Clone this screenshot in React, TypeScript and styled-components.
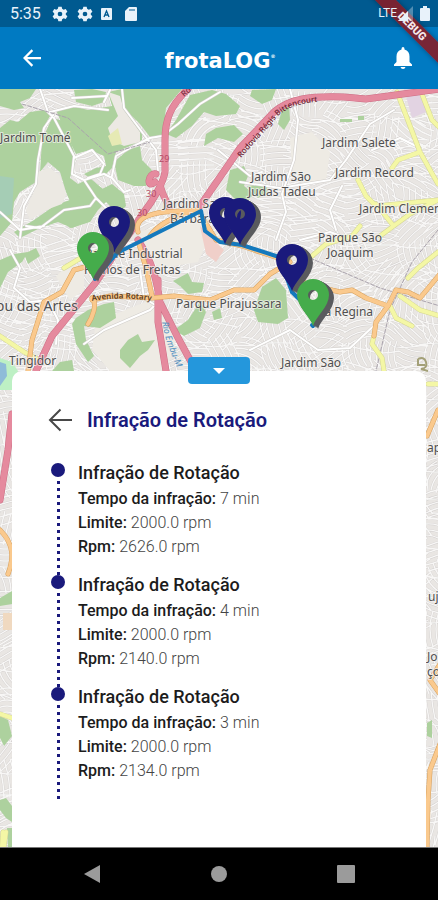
import React from "react";
import styled, { createGlobalStyle } from "styled-components";

const GlobalStyle = createGlobalStyle`
  *, *::before, *::after { box-sizing: border-box; }
  body { margin: 0; background: #000; font-family: Roboto, "Liberation Sans", sans-serif; }
  button { font: inherit; }
`;

const NAVY = "#1a1a7c";
const GREEN = "#45ac4b";

const Screen = styled.div`
  position: relative;
  display: flex;
  flex-direction: column;
  min-height: 100vh;
  overflow: hidden;
  background: #eeebe8;
`;

const StatusBar = styled.div`
  display: flex;
  align-items: center;
  justify-content: space-between;
  height: 27px;
  padding: 0 8px 0 10px;
  background: #005a90;
  color: #e8f2fa;
`;

const StatusGroup = styled.div<{ $gap: number }>`
  position: relative;
  z-index: 1;
  display: flex;
  align-items: center;
  gap: ${(p) => p.$gap}px;
`;

const Clock = styled.time`
  width: 34px;
  font-size: 16px;
  line-height: 27px;
`;

const Network = styled.span`
  font-size: 12px;
  line-height: 27px;
`;

const AppBar = styled.header`
  display: grid;
  grid-template-columns: 64px 1fr 70px;
  align-items: center;
  height: 62px;
  background: #007ac2;
  color: #fff;
`;

const IconButton = styled.button`
  display: flex;
  align-items: center;
  justify-content: center;
  padding: 0;
  border: 0;
  background: none;
  color: inherit;
  cursor: pointer;
`;

const Brand = styled.h1`
  margin: 0;
  padding-left: 8px;
  text-align: center;
  font: 700 21px/28px "DejaVu Sans", sans-serif;

  small { font-size: 5px; vertical-align: 10px; }
`;

const DebugBanner = styled.div`
  position: absolute;
  top: 19px;
  right: -29px;
  width: 110px;
  transform: rotate(45deg);
  background: rgba(130, 30, 42, 0.92);
  box-shadow: 0 0 5px rgba(0, 0, 0, 0.35);
  color: #f5e8ea;
  text-align: center;
  font-size: 11px;
  font-weight: 900;
  line-height: 15px;
`;

const Stage = styled.main`
  position: relative;
  display: flex;
  flex: 1;
  flex-direction: column;
  border-bottom: 1px solid #777;
`;

const MapCanvas = styled.svg`
  position: absolute;
  inset: 0;
  width: 100%;
  height: 100%;
`;

const Sheet = styled.section`
  position: relative;
  flex: 1;
  margin: 282px 12px 0;
  padding: 36px 36px 40px;
  border-radius: 10px 10px 0 0;
  background: #fff;
`;

const Handle = styled(IconButton)`
  position: absolute;
  top: -14px;
  left: 50%;
  width: 62px;
  height: 27px;
  transform: translateX(-50%);
  border-radius: 4px;
  background: #2497dc;
  color: #fff;
`;

const SheetHeader = styled.div`
  display: flex;
  align-items: center;
  gap: 15px;
  height: 26px;
  margin-bottom: 30px;
  color: #484848;
`;

const SheetTitle = styled.h2`
  margin: 0;
  color: ${NAVY};
  font-size: 20px;
  font-weight: 600;
  line-height: 26px;
`;

const Timeline = styled.ol`
  margin: 0;
  padding: 0 0 0 3px;
  list-style: none;
`;

const Event = styled.li`
  display: grid;
  grid-template-columns: 14px 1fr;
  column-gap: 13px;
`;

const Rail = styled.div`
  display: flex;
  flex-direction: column;
  align-items: center;

  &::before {
    content: "";
    width: 14px;
    height: 14px;
    border-radius: 50%;
    background: ${NAVY};
  }

  &::after {
    content: "";
    flex: 1;
    width: 3px;
    background: repeating-linear-gradient(transparent 0 4px, ${NAVY} 4px 7px);
  }
`;

const EventBody = styled.div`
  padding-bottom: 16px;
`;

const EventTitle = styled.h3`
  margin: 0 0 4px;
  color: #1c1c1c;
  font-size: 18px;
  font-weight: 500;
  line-height: 20px;
`;

const Facts = styled.dl`
  margin: 0;
  font-size: 16px;
  line-height: 24px;
`;

const Fact = styled.div`
  display: flex;
  gap: 4px;

  dt { color: #1c1c1c; font-weight: 500; }
  dd { margin: 0; color: #444; font-weight: 300; }
`;

const NavBar = styled.nav`
  display: grid;
  grid-template-columns: repeat(3, 1fr);
  height: 52px;
  padding: 0 29px;
  background: #000;
  color: #9b9b9b;
`;

/* ---------- map ---------- */

function buildStreets() {
  let seed = 17;
  const rnd = () => {
    seed = (seed * 16807) % 2147483647;
    return seed / 2147483647;
  };
  let d = "";
  for (let y = 92; y < 860; y += 25) {
    for (let x = -5; x < 450; x += 27) {
      const a = rnd() * Math.PI;
      const c = Math.cos(a);
      const s = Math.sin(a);
      const bend = (rnd() - 0.5) * 16;
      const len = 12 + rnd() * 8;
      for (let i = -2; i <= 2; i++) {
        const ox = x + 12 - s * i * 6;
        const oy = y + 12 + c * i * 6;
        d += `M${Math.round(ox - c * len)} ${Math.round(oy - s * len)}Q${Math.round(ox - s * bend)} ${Math.round(oy + c * bend)} ${Math.round(ox + c * len)} ${Math.round(oy + s * len)}`;
      }
      d += `M${x - 8} ${y + 3}q${Math.round(rnd() * 22)} ${Math.round(rnd() * 20 - 8)} 34 ${Math.round(rnd() * 14 - 5)}`;
    }
  }
  return d;
}
const streets = buildStreets();

const woods = [
  "M0 89H36L30 98 20 102 24 108 14 110 0 106Z",
  "M0 128L10 120 18 122 30 112 44 110 50 116 42 130 38 160 36 182 20 192 14 202 12 222 0 236Z",
  "M52 118L64 121 76 158 70 178 78 184 90 178 104 190 108 200 98 210 90 222 70 228 64 222 72 206 66 192 60 172 48 162 40 172 42 140Z",
  "M56 110L72 106 88 110 112 106 108 92 122 89 126 106 142 132 142 140 130 146 116 152 112 168 104 176 90 178 84 174 96 168 106 166 104 156 90 150 76 154 66 134Z",
  "M74 90L92 89 106 92 104 102 92 106 76 102Z",
  "M88 179L100 190 112 184 124 194 126 206 118 214 106 202 96 194Z",
  "M121 89H182L166 108 163 136 150 137 140 124 126 110Z",
  "M114 162L128 150 140 146 142 160 152 170 146 186 134 186 118 180Z",
  "M190 95L212 90 226 94 240 106 236 114 216 116 204 112 192 126 176 138 166 134 176 120Z",
  "M216 128L234 125 243 134 234 142 218 138 204 146 206 134Z",
  "M230 170L244 166 248 176 244 186 254 194 244 204 236 200 226 190Z",
  "M252 90L276 89 272 100 262 104 250 96Z",
  "M282 110L289 104 290 120 284 130 278 124Z",
  "M247 186L266 184 268 192 258 198Z",
  "M14 232L34 220 54 206 80 196 90 204 84 212 88 222 72 228 58 222 40 228 20 238Z",
  "M76 318L88 310 104 304 114 302 116 318 100 328 84 326 86 340 94 356 88 362 76 344 72 324Z",
  "M120 350L128 340 138 334 142 342 155 340 148 350 140 356 130 368 120 358Z",
  "M173 281L188 273 192 282 204 283 202 292 188 294 180 286Z",
  "M174 330L188 320 200 302 206 312 200 328 184 336Z",
  "M262 287L276 278 286 290 288 318 278 324 258 322 254 310Z",
  "M0 260L14 254 28 252 22 262 8 272 0 288Z",
  "M24 254L36 248 40 256 28 264Z",
  "M60 362L72 360 74 371H52Z",
  "M212 312L220 308 222 318 214 320Z",
  "M0 598L12 591V604L0 606Z",
  "M0 716L8 720 12 736 4 746 0 738Z",
  "M0 800L6 798 12 806V822L6 818 0 810Z",
  "M7 828H12V847H8Z",
  "M340 119H352V122H340ZM358 116H364V120H358Z",
  "M427 723L432 720V738L427 736Z",
];

const fields = [
  "M38 172L50 168 60 176 66 194 62 204 46 210 30 220 26 210 34 192Z",
  "M108 92L120 96 124 110 140 132 140 142 124 146 112 140 108 128 118 116Z",
  "M138 232L204 214 210 236 198 262 160 268 140 250Z",
  "M96 322L160 296 178 334 166 371H110L92 350Z",
  "M290 138L312 132 330 152 326 180 304 186 292 168Z",
  "M56 276L72 262 84 270 84 290 70 300Z",
];

const lanes =
  "M40 89L48 112 54 118 74 156 72 174 84 180 104 174 112 178 124 192 130 190M54 114L44 128 38 160 36 184 24 206 20 238M50 112L74 106 108 110M72 98L106 96M110 90L104 102M74 158L92 150 104 164 100 174 88 178M112 176L116 156 134 146 150 138 162 136 178 124 200 104 220 92M122 89L124 108 142 132 156 150 158 172M84 180L96 198 90 206 64 210 40 228 26 226M96 198L110 212M0 212L20 230 44 226M290 89L298 120 294 160 282 194 286 212 276 240M346 160L330 180 280 188 240 182M394 110L370 124 346 160M218 150L250 176 262 172M10 250L20 268 14 288 30 302 48 300 58 320 56 344M140 270L144 298 160 308M250 350L290 330 318 350 350 348 380 320M84 344L104 330 150 310 160 300M420 148L400 138 372 150M300 240L330 232 352 240M342 186L330 210 336 230";

const majors = ["M150 236C158 224 178 214 198 210L216 240 242 246 278 258 306 284 340 292 352 290 366 298 388 306 396 290 408 292 420 298 440 274", "M138 232C134 218 150 214 164 212L198 210", "M92 298C98 304 92 318 88 324M96 264L74 270 62 292 44 302 32 340 28 371M0 530C14 544 14 558 8 574M92 300L110 296 152 298 174 296 210 300 234 290 254 290 270 274 290 262", "M388 306L376 322 374 336M139 244L146 268 152 296M438 410L427 436M440 664L430 680 440 694M440 744L430 770 428 800 427 847"];

const minors = ["M397 92L420 152 438 184M420 89L432 120 440 128M420 152L398 160 392 168M358 180L366 196 376 206 438 200M438 200L410 214 380 236", "M376 204L392 224M438 252L418 268 408 278M390 306L396 318 412 326M374 336L372 344 382 358 384 371M400 296L420 310 440 316M0 336L24 352 36 358M64 268L84 256 96 252", "M312 256L326 244 352 236 360 226M3 832L2 847M0 714L12 718M428 384H440M6 832L4 846"];

const trunks = ["M188 89C170 106 165 120 165 140V172C163 184 152 202 144 212L132 230 112 258 96 282 52 336 36 371", "M440 89L366 99 344 97C310 96 290 98 274 112L240 148 218 180 200 206", "M155 182C146 190 148 172 156 174M160 184C162 196 168 202 170 210M138 240C152 262 156 276 160 302L176 334 196 371M158 280V322L166 371M12 414L8 450 0 500"];

interface LabelData { x: number; y: number; text: string; size?: number; }
const labels: LabelData[] = [
  { x: 0, y: 142, text: "Jardim Tomé" },
  { x: 322, y: 147, text: "Jardim Salete" },
  { x: 335, y: 177, text: "Jardim Record" },
  { x: 251, y: 181, text: "Jardim São" },
  { x: 248, y: 196, text: "Judas Tadeu" },
  { x: 359, y: 213, text: "Jardim Clemente" },
  { x: 318, y: 242, text: "Parque São" },
  { x: 327, y: 257, text: "Joaquim" },
  { x: 163, y: 208, text: "Jardim Santa" },
  { x: 170, y: 223, text: "Bárbara" },
  { x: 85, y: 258, text: "Parque Industrial" },
  { x: 84, y: 274, text: "Ramos de Freitas" },
  { x: -25, y: 311, text: "Embu das Artes", size: 14 },
  { x: 176, y: 308, text: "Parque Pirajussara" },
  { x: 311, y: 316, text: "Vila Regina" },
  { x: 281, y: 367, text: "Jardim São" },
  { x: 9, y: 365, text: "Tingidor" },
  { x: 427, y: 452, text: "apão" },
  { x: 428, y: 601, text: "uj" },
  { x: 427, y: 661, text: "Jo" },
  { x: 427, y: 676, text: "ço" },
];

const PIN_BODY = "M0 0C-3 -10 -16 -19 -16 -31A16 16 0 0 1 16 -31C16 -19 3 -10 0 0Z";
const PIN = `${PIN_BODY}M5 -31A5 5 0 1 0 -5 -31A5 5 0 1 0 5 -31Z`;
const PIN_SHADE = `${PIN_BODY}M8 -31A8 8 0 1 0 -8 -31A8 8 0 1 0 8 -31Z`;

function Pin({ x, y, color }: { x: number; y: number; color: string }) {
  return (
    <g transform={`translate(${x} ${y})`} fillRule="evenodd">
      {[5, 4, 3, 2, 1].map((n) => (
        <path key={n} d={PIN_SHADE} transform={`translate(${n} ${Math.round(n / 2)})`} fill="#5a5b5e" />
      ))}
      <path d={PIN} fill={color} />
    </g>
  );
}

function RouteMap() {
  return (
    <MapCanvas viewBox="0 89 438 758" preserveAspectRatio="xMidYMin slice" role="img" aria-label="Mapa da rota">
      <rect y="89" width="438" height="758" fill="#e9e6e3" />
      <g fill="none">
        <path d={streets} stroke="#cfcccb" strokeWidth="2" />
        <path d={streets} stroke="#f8f7f6" strokeWidth="1.4" />
      </g>
      <path d={fields.join("")} fill="#eeebe4" />
      {woods.map((d) => <path key={d} d={d} fill="#add19e" />)}
      <path d={fields.slice(0, 2).join("")} fill="#ece9e3" />
      <path d="M108 136L118 128 122 144 112 146Z" fill="#e6eab4" />
      <path d="M0 176L14 178 12 214 0 218Z" fill="#a5cdb5" />
      <path d="M0 358L12 362 18 371 12 390H0Z" fill="#bdf0c4" />
      <path d="M0 362L6 364 7 376 0 386Z" fill="#8fbcd8" />
      <path d="M404 89H422L426 112 412 118Z" fill="#e2d3e2" />
      <path d="M200 226L224 250 216 262 206 254Z" fill="#f0cfc9" />
      <path d="M3 613H12V630H3Z" fill="#f0d9c0" />
      <g fill="none" strokeLinejoin="round" strokeLinecap="round">
        <path d={lanes} stroke="#d0cdca" strokeWidth="3" />
        <path d={lanes} stroke="#fff" strokeWidth="2" />
        <path d="M22 104L68 118 108 154 150 142M310 258L380 288 440 306M438 230L412 262 390 310 376 371" stroke="#aaa3ad" strokeDasharray="4 2" />
        <path d={minors.join("")} stroke="#d3d594" strokeWidth="5" />
        <path d={minors.join("")} stroke="#f4f7a5" strokeWidth="4" />
        <path d={trunks.join("")} stroke="#cc6e85" strokeWidth="7" />
        <path d={trunks.join("")} stroke="#e58a9e" strokeWidth="6" />
        <path d={majors.join("")} stroke="#d7a15e" strokeWidth="5" />
        <path d={majors.join("")} stroke="#fac98d" strokeWidth="4" />
      </g>
      <path d="M418 359Q424 356 426 362T421 369L428 371M418 359V365H425" fill="none" stroke="#a3a078" strokeWidth="2" />
      <defs>
        <path id="bittencourt" d="M241 158L278 116C292 103 310 102 344 100" />
        <path id="embu" d="M162 322C166 344 172 356 184 384" />
        <path id="rotary" d="M92 301Q122 296 152 301" />
      </defs>
      <g fontFamily='"Noto Sans", sans-serif' fontSize="8">
        <text fill="#6b2233" fontWeight="500"><textPath href="#bittencourt">Rodovia Régis Bittencourt</textPath></text>
        <text x="184" y="97" fill="#6b2233" transform="rotate(-40 184 97)">Ro</text>
        <text fill="#4f8fc0" fontSize="9" fontStyle="italic"><textPath href="#embu">Rio Embu-M</textPath></text>
        <text fill="#5b3b1c" fontWeight="600"><textPath href="#rotary">Avenida Rotary</textPath></text>
        <g fill="#b54c64" fontSize="9">
          <text x="159" y="162">29</text>
          <text x="146" y="197">30</text>
          <text x="137" y="216">30</text>
        </g>
      </g>
      <g fontFamily='"Noto Sans", sans-serif' fill="#505050" stroke="#f5f3f1" strokeWidth="2" strokeOpacity="0.7" paintOrder="stroke">
        {labels.map((l) => (
          <text key={`${l.x}-${l.y}`} x={l.x} y={l.y} fontSize={l.size ?? 12}>{l.text}</text>
        ))}
      </g>
      <path d="M95 279L117 253 201 211 205 231 220 242 242 245 279 257 292 292" fill="none" stroke="#1479bd" strokeWidth="4" strokeLinejoin="round" strokeLinecap="round" />
      <path d="M292 292L300 300M312 325L313 326" fill="none" stroke="#1479bd" strokeWidth="4" strokeLinecap="round" />
      <Pin x={114} y={253} color={NAVY} />
      <Pin x={93} y={279} color={GREEN} />
      <Pin x={225} y={244} color={NAVY} />
      <Pin x={240} y={245} color={NAVY} />
      <Pin x={292} y={291} color={NAVY} />
      <Pin x={313} y={326} color={GREEN} />
    </MapCanvas>
  );
}

/* ---------- icons ---------- */

const Gear = () => (
  <svg width="16" height="16" viewBox="0 0 24 24" fill="currentColor" aria-hidden="true">
    <path fillRule="evenodd" d="M9.500 1H14.500L15.200 4.200 17.500 5.500 20.600 4.500 23.100 8.800 20.700 11V13L23.100 15.200 20.600 19.500 17.500 18.500 15.200 19.800 14.500 23H9.500L8.800 19.800 6.500 18.500 3.400 19.500 .9 15.200 3.300 13V11L.9 8.800 3.400 4.500 6.500 5.500 8.800 4.200ZM12 15.500A3.500 3.500 0 1 0 12 8.500A3.500 3.500 0 1 0 12 15.500Z" />
  </svg>
);

const BoxedA = () => (
  <svg width="11" height="12" viewBox="0 0 11 12" aria-hidden="true">
    <rect width="11" height="12" rx="1" fill="currentColor" />
    <path d="M3 9L5.500 3 8 9M4 7H7" fill="none" stroke="#005a90" strokeWidth="1.300" />
  </svg>
);

const SdCard = () => (
  <svg width="12" height="14" viewBox="0 0 12 14" aria-hidden="true">
    <path d="M4 0H11Q12 0 12 1V13Q12 14 11 14H1Q0 14 0 13V4Z" fill="currentColor" />
    <path d="M5 2V4M7 2V4M9 2V4" stroke="#005a90" strokeWidth="1" />
  </svg>
);

const Signal = () => (
  <svg width="15" height="15" viewBox="0 0 15 15" aria-hidden="true">
    <path d="M15 0V15H0Z" fill="currentColor" opacity="0.35" />
    <path d="M10 5V15H0Z" fill="currentColor" />
  </svg>
);

const Battery = () => (
  <svg width="10" height="15" viewBox="0 0 10 15" aria-hidden="true">
    <path d="M3 0H7V2H9Q10 2 10 3V14Q10 15 9 15H1Q0 15 0 14V3Q0 2 1 2H3Z" fill="currentColor" />
  </svg>
);

const Arrow = ({ size, weight }: { size: number; weight: number }) => (
  <svg width={size} height={size} viewBox="0 0 24 24" fill="none" stroke="currentColor" strokeWidth={weight} aria-hidden="true">
    <path d="M24 12H2M12.500 1.500L2 12 12.500 22.500" />
  </svg>
);

const Bell = () => (
  <svg width="18" height="22" viewBox="0 0 18 22" fill="currentColor" aria-hidden="true">
    <path d="M9 0Q10.500 0 10.500 2V2.500Q15.500 4 15.500 9.500V15L18 17.500V19H0V17.500L2.500 15V9.500Q2.500 4 7.500 2.500V2Q7.500 0 9 0ZM6.500 20H11.500Q11 22 9 22T6.500 20Z" />
  </svg>
);

const NavGlyph = ({ d }: { d: string }) => (
  <svg width="18" height="18" viewBox="0 0 18 18" fill="currentColor" aria-hidden="true"><path d={d} /></svg>
);

const events = [
  { tempo: "7 min", limite: "2000.0 rpm", rpm: "2626.0 rpm" },
  { tempo: "4 min", limite: "2000.0 rpm", rpm: "2140.0 rpm" },
  { tempo: "3 min", limite: "2000.0 rpm", rpm: "2134.0 rpm" },
];

export default function App() {
  return (
    <>
      <GlobalStyle />
      <Screen>
        <StatusBar>
          <StatusGroup $gap={8}>
            <Clock>5:35</Clock>
            <StatusGroup $gap={9}><Gear /><Gear /></StatusGroup>
            <StatusGroup $gap={13}><BoxedA /><SdCard /></StatusGroup>
          </StatusGroup>
          <StatusGroup $gap={7}>
            <StatusGroup $gap={1}><Network>LTE</Network><Signal /></StatusGroup>
            <Battery />
          </StatusGroup>
        </StatusBar>
        <AppBar>
          <IconButton aria-label="Voltar"><Arrow size={18} weight={3} /></IconButton>
          <Brand>frotaLOG<small>®</small></Brand>
          <IconButton aria-label="Notificações"><Bell /></IconButton>
        </AppBar>
        <Stage>
          <RouteMap />
          <Sheet>
            <Handle aria-label="Recolher painel">
              <svg width="12" height="6" viewBox="0 0 12 6" aria-hidden="true"><path d="M0 0H12L6 6Z" fill="currentColor" /></svg>
            </Handle>
            <SheetHeader>
              <IconButton aria-label="Voltar à lista"><Arrow size={24} weight={2} /></IconButton>
              <SheetTitle>Infração de Rotação</SheetTitle>
            </SheetHeader>
            <Timeline>
              {events.map((e) => (
                <Event key={e.rpm}>
                  <Rail />
                  <EventBody>
                    <EventTitle>Infração de Rotação</EventTitle>
                    <Facts>
                      <Fact><dt>Tempo da infração:</dt><dd>{e.tempo}</dd></Fact>
                      <Fact><dt>Limite:</dt><dd>{e.limite}</dd></Fact>
                      <Fact><dt>Rpm:</dt><dd>{e.rpm}</dd></Fact>
                    </Facts>
                  </EventBody>
                </Event>
              ))}
            </Timeline>
          </Sheet>
        </Stage>
        <NavBar aria-label="Sistema">
          <IconButton aria-label="Retornar"><NavGlyph d="M1 9L17 0V18Z" /></IconButton>
          <IconButton aria-label="Início"><NavGlyph d="M9 1A8 8 0 1 1 9 17A8 8 0 1 1 9 1Z" /></IconButton>
          <IconButton aria-label="Aplicativos recentes"><NavGlyph d="M1 0H17Q18 0 18 1V17Q18 18 17 18H1Q0 18 0 17V1Q0 0 1 0Z" /></IconButton>
        </NavBar>
        <DebugBanner>DEBUG</DebugBanner>
      </Screen>
    </>
  );
}
